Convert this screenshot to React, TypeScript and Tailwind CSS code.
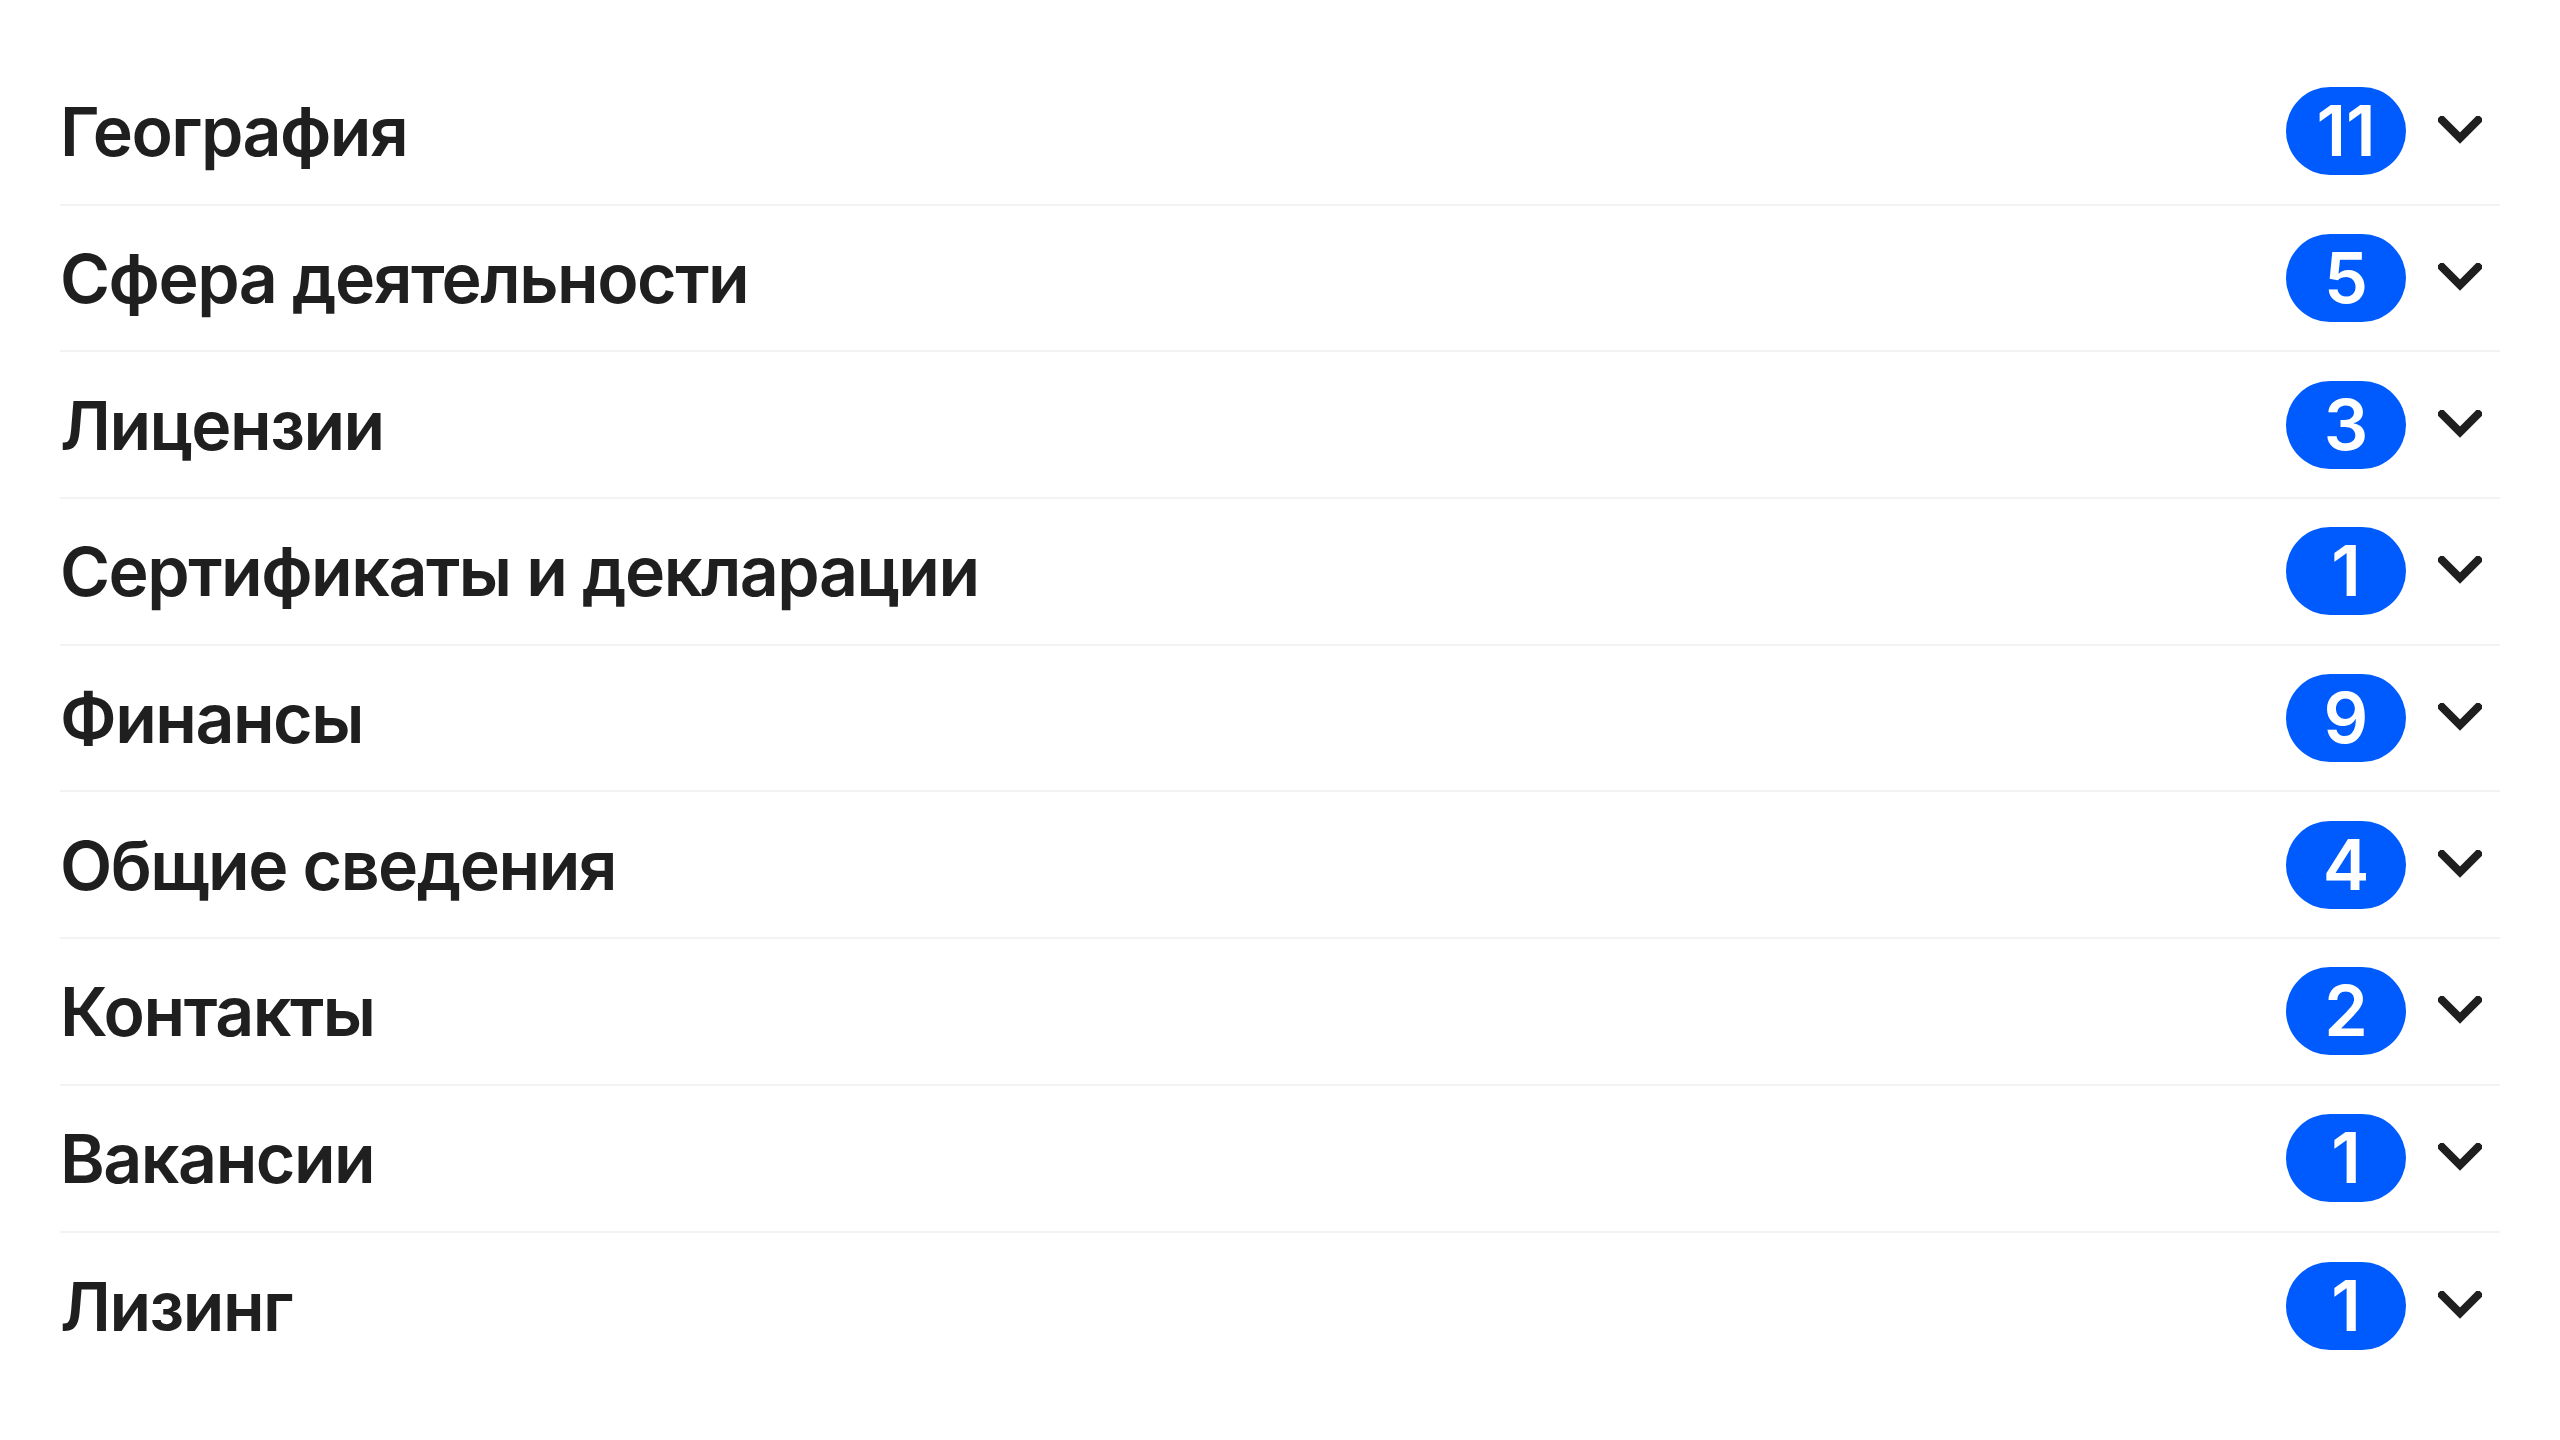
const sections = [
  { title: 'География', count: 11 },
  { title: 'Сфера деятельности', count: 5 },
  { title: 'Лицензии', count: 3 },
  { title: 'Сертификаты и декларации', count: 1 },
  { title: 'Финансы', count: 9 },
  { title: 'Общие сведения', count: 4 },
  { title: 'Контакты', count: 2 },
  { title: 'Вакансии', count: 1 },
  { title: 'Лизинг', count: 1 },
];

const Chevron = () => (
  <svg width="44" height="30" viewBox="0 0 44 30" fill="none" className="mr-[18px] shrink-0">
    <path d="M4 4 L22 22 L40 4" stroke="#1f1f1f" strokeWidth="8" strokeLinecap="square" />
  </svg>
);

const SectionRow = ({ title, count, last }: { title: string; count: number; last: boolean }) => (
  <div
    className={`flex h-[146.7px] items-center justify-between ${last ? '' : 'border-b-2 border-[#f2f3f5]'}`}
  >
    <span className="text-[68px] font-semibold leading-none text-[#1f1f1f] tracking-[-1.5px]">{title}</span>
    <div className="flex items-center gap-8">
      <span className="flex h-[88px] w-[120px] items-center justify-center rounded-full bg-[#005bff] text-[70px] font-semibold leading-none text-white">
        {count}
      </span>
      <Chevron />
    </div>
  </div>
);

export default function App() {
  return (
    <div className="min-h-screen bg-white px-[60px] pt-[59px]" style={{ fontFamily: 'Inter, "Noto Sans", sans-serif' }}>
      {sections.map((s, i) => (
        <SectionRow key={s.title} title={s.title} count={s.count} last={i === sections.length - 1} />
      ))}
    </div>
  );
}
